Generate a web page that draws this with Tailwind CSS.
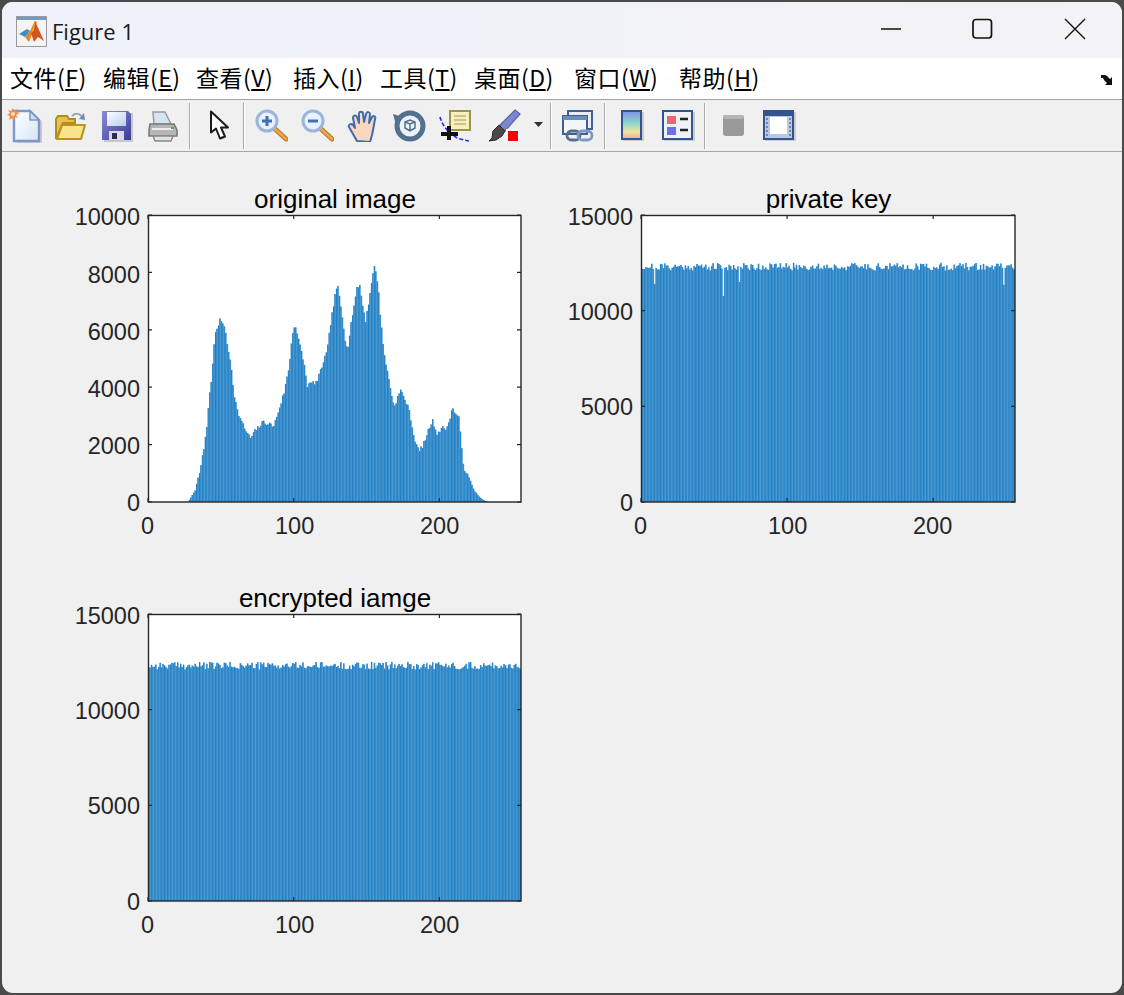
<!doctype html>
<html lang="en">

<head>
  <meta charset="UTF-8" />
  <title>Figure 1</title>
  <script src="https://cdn.jsdelivr.net/npm/@tailwindcss/browser@4"></script>
</head>

<body class="bg-[#4a4a4a] h-[995px] w-[1124px] overflow-hidden">
  <main class="mx-[2px] mt-[2px] h-[991px] w-[1120px] rounded-[11px] overflow-hidden bg-[#f0f0f0] flex flex-col">

    <!-- Title bar -->
    <header class="h-[56px] bg-gradient-to-r from-[#eff2fa] to-[#f3f2f6] flex items-center shrink-0">
      <svg class="ml-[14px] mt-[2px] w-[31px] h-[31px]" viewBox="0 0 31 31">
        <rect x="0.5" y="0.5" width="30" height="30" fill="#f4f4f4" stroke="#9a9a9a" />
        <rect x="1" y="1" width="29" height="3" fill="#6f9cc4" />
        <path d="M3 18 L11 13 L14 15 L9 21 Z" fill="#3d8fc9" />
        <path d="M9 21 L14 15 L19 5 L21 6 L16 18 L13 26 Z" fill="#e8822a" />
        <path d="M19 5 L23 14 L28 25 L22 21 L18 26 L15 17 Z" fill="#d9531e" />
        <path d="M19 5 L17 12 L15 17 L18 14 Z" fill="#f4c230" />
      </svg>
      <span class="ml-[5px] mt-[1px] text-[22px] text-[#1a1a1a] font-['Open_Sans','Noto_Sans',sans-serif] leading-none">Figure 1</span>
      <div class="ml-auto flex items-center mt-[-3px]">
        <svg class="w-[22px] h-[22px]" viewBox="0 0 22 22"><path d="M1 11h20" stroke="#111" stroke-width="1.7" /></svg>
        <svg class="ml-[69px] w-[22px] h-[22px]" viewBox="0 0 22 22"><rect x="2" y="1.5" width="18.5" height="18.5" rx="3" fill="none" stroke="#111" stroke-width="1.7" /></svg>
        <svg class="ml-[71px] mr-[36px] w-[22px] h-[22px]" viewBox="0 0 22 22"><path d="M1 1l20 20M21 1L1 21" stroke="#111" stroke-width="1.4" /></svg>
      </div>
    </header>

    <!-- Menu bar -->
    <nav class="h-[42px] bg-white border-b border-[#a3a3a3] flex items-center shrink-0 pl-[8px] text-[23px] tracking-[0.5px] leading-none text-black font-['Noto_Sans_CJK_SC','Noto_Sans',sans-serif]">
      <span class="w-[93px] mt-[-2px]">文件(<u>F</u>)</span>
      <span class="w-[93px] mt-[-2px]">编辑(<u>E</u>)</span>
      <span class="w-[97px] mt-[-2px]">查看(<u>V</u>)</span>
      <span class="w-[87px] mt-[-2px]">插入(<u>I</u>)</span>
      <span class="w-[94px] mt-[-2px]">工具(<u>T</u>)</span>
      <span class="w-[100px] mt-[-2px]">桌面(<u>D</u>)</span>
      <span class="w-[105px] mt-[-2px]">窗口(<u>W</u>)</span>
      <span class="mt-[-2px]">帮助(<u>H</u>)</span>
      <svg class="ml-auto mr-[7px] mt-[1px] w-[15px] h-[13px]" viewBox="0 0 15 13">
        <path d="M1 2h4l2 1 3 3 2-2v8H5l2-2-3-3-1-2H1z" fill="#111" />
      </svg>
    </nav>

    <!-- Toolbar -->
    <div class="h-[52px] bg-[#f0f0f0] border-b border-[#a8a8a8] flex items-center shrink-0 blur-[0.4px]">
      <span class="w-[46px] flex justify-center">
        <svg class="w-[36px] h-[36px]" viewBox="0 0 36 36">
          <defs>
            <linearGradient id="page" x1="0" y1="0" x2="1" y2="1"><stop offset="0" stop-color="#fff" /><stop offset="1" stop-color="#d5e6f8" /></linearGradient>
          </defs>
          <path d="M8 3h16l9 9v21H8z" fill="#8a8a8a" opacity=".35" transform="translate(2 2)" />
          <path d="M7 3h16l9 9v21H7z" fill="url(#page)" stroke="#7d97c9" stroke-width="2.4" />
          <path d="M23 3v9h9z" fill="#cfdcef" stroke="#7d97c9" stroke-width="1.5" />
          <path d="M6 0l1 3 3-2-1 3 4 1-4 2 2 3-3-1-1 4-2-3-3 2 1-4-3-1 3-2-2-3 3 1z" fill="#ef8a55" />
          <circle cx="6" cy="6" r="2" fill="#ffe3b0" />
        </svg>
      </span>
      <span class="w-[46px] flex justify-center">
        <svg class="w-[32px] h-[30px]" viewBox="0 0 32 30">
          <path d="M1 28V8l2-3h9l2 3h6v4H8z" fill="#e9c052" stroke="#b08d1e" stroke-width="2" />
          <path d="M2 28l5-14h23l-4 14z" fill="#fbe58a" stroke="#b8951f" stroke-width="2.2" stroke-linejoin="round" />
          <path d="M17 5c3-3 8-3 10 1" fill="none" stroke="#9aa9bd" stroke-width="2" />
          <path d="M24 8l6 1-1-7z" fill="#6b8fb5" />
        </svg>
      </span>
      <span class="w-[46px] flex justify-center">
        <svg class="w-[32px] h-[32px]" viewBox="0 0 32 32">
          <defs>
            <linearGradient id="disk" x1="0" y1="0" x2="1" y2="1"><stop offset="0" stop-color="#8b8bd8" /><stop offset="1" stop-color="#3b3b96" /></linearGradient>
            <linearGradient id="label" x1="0" y1="0" x2="1" y2="1"><stop offset="0" stop-color="#fff" /><stop offset="1" stop-color="#b9cdf0" /></linearGradient>
          </defs>
          <rect x="3" y="3" width="29" height="29" fill="#8a8a8a" opacity=".4" />
          <path d="M1 1h26l3 3v26H1z" fill="url(#disk)" />
          <rect x="6" y="2" width="19" height="14" fill="url(#label)" />
          <rect x="8" y="21" width="15" height="9" fill="#d8d8e8" />
          <rect x="11" y="23" width="5" height="6" fill="#2c2c50" />
        </svg>
      </span>
      <span class="w-[46px] flex justify-center">
        <svg class="w-[30px] h-[32px]" viewBox="0 0 30 32">
          <path d="M6 14L5 2h12l6 12z" fill="#d6e4f2" stroke="#9a9a9a" stroke-width="1.5" />
          <path d="M2 14h24l3 6v6H1v-6z" fill="#b5b5b5" stroke="#7a7a7a" stroke-width="1.6" />
          <path d="M5 26h20l-2 5H7z" fill="#e2e2e2" stroke="#888" stroke-width="1.4" />
          <path d="M4 19h21" stroke="#ededed" stroke-width="2" />
          <rect x="23" y="17" width="3" height="2" fill="#4fa55a" />
        </svg>
      </span>
      <i class="block w-[2px] h-[46px] ml-[3px] mr-[5px] bg-[#a9a9a9] border-r border-white"></i>
      <span class="w-[46px] flex justify-center">
        <svg class="ml-[2px] w-[22px] h-[31px]" viewBox="0 0 22 31">
          <path d="M2 1.5v21l5-4 4 10 5-2-4-9h7z" transform="translate(1 1)" fill="#aaa" opacity=".4" />
          <path d="M2 1.5v21l5-4 4 10 5-2-4-9h7z" fill="#fff" stroke="#1c1c1c" stroke-width="2" stroke-linejoin="round" />
        </svg>
      </span>
      <i class="block w-[2px] h-[46px] ml-[1px] mr-[3px] bg-[#a9a9a9] border-r border-white"></i>
      <span class="w-[46px] flex justify-center">
        <svg class="w-[33px] h-[33px]" viewBox="0 0 33 33">
          <path d="M19 19l12 11" stroke="#b07a2a" stroke-width="5" stroke-linecap="round" />
          <path d="M20 20l11 10" stroke="#f0a540" stroke-width="3" stroke-linecap="round" />
          <circle cx="12" cy="12" r="10" fill="#e8f2ff" stroke="#9db4dd" stroke-width="3" />
          <path d="M7 12h10M12 7v10" stroke="#3f6fb5" stroke-width="3" />
        </svg>
      </span>
      <span class="w-[46px] flex justify-center">
        <svg class="w-[33px] h-[33px]" viewBox="0 0 33 33">
          <path d="M19 19l12 11" stroke="#b07a2a" stroke-width="5" stroke-linecap="round" />
          <path d="M20 20l11 10" stroke="#f0a540" stroke-width="3" stroke-linecap="round" />
          <circle cx="12" cy="12" r="10" fill="#e8f2ff" stroke="#9db4dd" stroke-width="3" />
          <path d="M7 12h10" stroke="#3f6fb5" stroke-width="3" />
        </svg>
      </span>
      <span class="w-[46px] flex justify-center">
        <svg class="w-[33px] h-[32px]" viewBox="0 0 33 32">
          <path d="M10 31L2 17c-1-2 2-4 4-2l2 3-2-10c0-3 3-3 4-1l2 6V4c0-3 4-3 4 0l1 8 2-8c1-3 4-2 4 0l-1 9 3-6c2-2 4 0 3 2l-2 11-1 5-2 7z" fill="#f8d9c0" stroke="#3f6cb0" stroke-width="2" stroke-linejoin="round" />
        </svg>
      </span>
      <span class="w-[46px] flex justify-center">
        <svg class="w-[34px] h-[33px]" viewBox="0 0 34 33">
          <circle cx="18" cy="17" r="13" fill="#eef1f6" stroke="#52708f" stroke-width="5" />
          <path d="M1 5l10 3-7 8z" fill="#52708f" />
          <path d="M13 13l5-2 5 2v6l-5 3-5-3zM13 13l5 2 5-2M18 15v7" fill="none" stroke="#52708f" stroke-width="1.5" />
        </svg>
      </span>
      <span class="w-[46px] flex justify-center">
        <svg class="w-[32px] h-[32px]" viewBox="0 0 32 32">
          <rect x="11" y="1" width="20" height="19" fill="#f7f0b8" stroke="#9c9350" stroke-width="2" />
          <path d="M15 6h12M15 10h12M15 14h12" stroke="#bdb77c" stroke-width="1.6" />
          <path d="M1 7c2 8 8 15 14 19 4 3 10 4 15 5" fill="none" stroke="#2a2af0" stroke-width="1.6" stroke-dasharray="4 2" />
          <path d="M2 24h17M10 16v14" stroke="#111" stroke-width="4" />
        </svg>
      </span>
      <span class="w-[46px] ml-[3px] flex justify-center">
        <svg class="w-[33px] h-[33px]" viewBox="0 0 33 33">
          <path d="M27 1l5 4-15 17-6-5z" fill="#7f86d0" stroke="#5a62a8" stroke-width="1.2" />
          <path d="M11 16l6 6-3 5-6 4-7 1 3-3 1-7z" fill="#4a4a4a" stroke="#2a2a2a" />
          <rect x="18" y="20" width="13" height="13" fill="#fff" />
          <rect x="20" y="22" width="10" height="10" fill="#f00" />
        </svg>
      </span>
      <svg class="w-[9px] h-[5px] ml-[7px] mr-[7px] mt-[-3px]" viewBox="0 0 9 5"><path d="M0 0h9L4.500 5z" fill="#333" /></svg>
      <i class="block w-[2px] h-[46px] mr-[3px] bg-[#a9a9a9] border-r border-white"></i>
      <span class="w-[46px] flex justify-center">
        <svg class="w-[32px] h-[32px]" viewBox="0 0 32 32">
          <rect x="6" y="1" width="24" height="18" fill="#e9edf5" stroke="#3f5f92" stroke-width="2" />
          <rect x="1" y="6" width="24" height="18" fill="#f2f5fa" stroke="#3f5f92" stroke-width="2" />
          <rect x="1" y="6" width="24" height="4" fill="#6a8ec0" />
          <rect x="5" y="21" width="13" height="9" rx="4.500" fill="none" stroke="#55708f" stroke-width="2.8" />
          <rect x="16" y="21" width="14" height="9" rx="4.500" fill="none" stroke="#7f9abf" stroke-width="2.8" />
        </svg>
      </span>
      <i class="block w-[2px] h-[46px] mx-[3px] bg-[#a9a9a9] border-r border-white"></i>
      <span class="w-[46px] flex justify-center">
        <svg class="w-[23px] h-[31px]" viewBox="0 0 23 31">
          <defs>
            <linearGradient id="cbar" x1="0" y1="0" x2="0" y2="1">
              <stop offset="0" stop-color="#7f8fe8" /><stop offset=".45" stop-color="#8fd8c8" /><stop offset=".75" stop-color="#f0e49a" /><stop offset="1" stop-color="#f0a5a0" />
            </linearGradient>
          </defs>
          <rect x="2" y="2" width="21" height="29" fill="#999" opacity=".4" />
          <rect x="1" y="1" width="19" height="28" fill="url(#cbar)" stroke="#33558f" stroke-width="2" />
        </svg>
      </span>
      <span class="w-[46px] flex justify-center">
        <svg class="w-[33px] h-[31px]" viewBox="0 0 33 31">
          <rect x="2" y="2" width="31" height="29" fill="#999" opacity=".4" />
          <rect x="1" y="1" width="29" height="28" fill="#eef1f8" stroke="#33558f" stroke-width="2" />
          <rect x="5" y="6" width="9" height="8" fill="#e86a6a" />
          <rect x="5" y="17" width="9" height="8" fill="#6a70e8" />
          <path d="M18 9h8M18 20h8" stroke="#222" stroke-width="2.400" />
        </svg>
      </span>
      <i class="block w-[2px] h-[46px] ml-[3px] mr-[4px] bg-[#a9a9a9] border-r border-white"></i>
      <span class="w-[46px] flex justify-center">
        <svg class="w-[23px] h-[23px]" viewBox="0 0 23 23">
          <rect x="1" y="1" width="21" height="21" rx="3" fill="#9a9a9a" />
          <rect x="1" y="1" width="21" height="4" rx="2" fill="#b5b5b5" />
        </svg>
      </span>
      <span class="w-[46px] flex justify-center">
        <svg class="w-[33px] h-[31px]" viewBox="0 0 33 31">
          <rect x="2" y="2" width="31" height="29" fill="#999" opacity=".4" />
          <rect x="1" y="1" width="29" height="28" fill="#b9c9e2" stroke="#33558f" stroke-width="2" />
          <rect x="1" y="1" width="29" height="5" fill="#33558f" />
          <path d="M4 8v19M27 8v19" stroke="#6f86ad" stroke-width="2" stroke-dasharray="2 2" />
          <rect x="7" y="7" width="17" height="17" fill="#fff" />
        </svg>
      </span>
    </div>

    <!-- Axes -->
    <section class="flex-1 pl-[146px] pt-[63px] grid grid-cols-[374px_375px] grid-rows-[288px_288px] gap-x-[119px] gap-y-[111px] content-start font-['Liberation_Sans',Arial,sans-serif] text-[23.5px] leading-none text-[#262626]">

      <div class="relative">
        <h2 class="absolute left-0 right-0 top-[-29px] text-center text-black text-[26px]">original image</h2>
        <svg id="hist-original" class="absolute left-0 top-0 w-[374px] h-[288px] overflow-visible"></svg>
        <span class="absolute right-[382px] top-[-9px]">10000</span>
        <span class="absolute right-[382px] top-[49px]">8000</span>
        <span class="absolute right-[382px] top-[106px]">6000</span>
        <span class="absolute right-[382px] top-[163px]">4000</span>
        <span class="absolute right-[382px] top-[220px]">2000</span>
        <span class="absolute right-[382px] top-[277px]">0</span>
        <span class="absolute left-[-7px] top-[300px]">0</span>
        <span class="absolute left-[127px] top-[300px]">100</span>
        <span class="absolute left-[272px] top-[300px]">200</span>
      </div>

      <div class="relative">
        <h2 class="absolute left-0 right-0 top-[-29px] text-center text-black text-[26px]">private key</h2>
        <svg id="hist-key" class="absolute left-0 top-0 w-[375px] h-[288px] overflow-visible"></svg>
        <span class="absolute right-[383px] top-[-9px]">15000</span>
        <span class="absolute right-[383px] top-[86px]">10000</span>
        <span class="absolute right-[383px] top-[181px]">5000</span>
        <span class="absolute right-[383px] top-[277px]">0</span>
        <span class="absolute left-[-7px] top-[300px]">0</span>
        <span class="absolute left-[127px] top-[300px]">100</span>
        <span class="absolute left-[272px] top-[300px]">200</span>
      </div>

      <div class="relative">
        <h2 class="absolute left-0 right-0 top-[-29px] text-center text-black text-[26px]">encrypted iamge</h2>
        <svg id="hist-encrypted" class="absolute left-0 top-0 w-[374px] h-[288px] overflow-visible"></svg>
        <span class="absolute right-[382px] top-[-9px]">15000</span>
        <span class="absolute right-[382px] top-[86px]">10000</span>
        <span class="absolute right-[382px] top-[181px]">5000</span>
        <span class="absolute right-[382px] top-[277px]">0</span>
        <span class="absolute left-[-7px] top-[300px]">0</span>
        <span class="absolute left-[127px] top-[300px]">100</span>
        <span class="absolute left-[272px] top-[300px]">200</span>
      </div>
    </section>
  </main>

  <script>
    // small seeded generator so every render gets the same bars
    function makeRandom(seed) {
      return function () {
        seed = (seed * 1664525 + 1013904223) % 4294967296;
        return seed / 4294967296;
      };
    }

    // [bin, count] outline of the first histogram
    var curve = [[0,0],[27,0],[28.800,140],[32,418],[35.700,1185],[38,1880],[40.300,2750],[41.400,3620],[43,4150],[45.300,5760],[49,6320],[51.700,6260],[54.400,5360],[56.300,4950],[58.600,3840],[60.900,3200],[64.300,2750],[67.700,2400],[70,2230],[73.400,2500],[79,2800],[86,2650],[88.300,3030],[92.900,3800],[96.300,4670],[98.600,5820],[100.400,6240],[103.800,5470],[106.600,4890],[108.900,4070],[112.400,4150],[115.800,4190],[120.300,4950],[122.600,5240],[125,6240],[129.500,7630],[131.800,6860],[134,6060],[135.200,5590],[136.800,5410],[139.800,6520],[142.800,7390],[144.800,7630],[146.700,6930],[149,6340],[151.200,6980],[153,7680],[155.300,8260],[157.400,7630],[159.200,6460],[162,5060],[164.900,4320],[168.400,3320],[173,3900],[176.400,3550],[179.400,3100],[182,2330],[185.600,1750],[189,2050],[194.700,2860],[198.100,2400],[201.600,2580],[205,2580],[208.400,3270],[213,2930],[214.600,2050],[216.400,1180],[219.800,880],[223.300,420],[228,140],[231.300,30],[234,0],[256,0]];

    function originalCounts() {
      var rnd = makeRandom(7), out = [];
      for (var b = 0; b < 256; b++) {
        var i = 0;
        while (curve[i + 1][0] <= b && i < curve.length - 2) i++;
        var a = curve[i], c = curve[i + 1];
        var v = a[1] + (c[1] - a[1]) * (b - a[0]) / (c[0] - a[0]);
        out.push(Math.max(0, v + (rnd() - 0.5) * Math.min(160, v * 0.08)));
      }
      return out;
    }

    function flatCounts(seed, dips) {
      var rnd = makeRandom(seed), out = [];
      for (var b = 0; b < 256; b++) out.push(12300 + (rnd() - 0.5) * 400);
      for (var k in dips) out[k] = dips[k];
      return out;
    }

    // sizes are passed in: the stylesheet may not be applied yet when this runs
    function drawAxes(id, boxW, boxH, counts, yMax, ticks) {
      var svg = document.getElementById(id);
      var W = boxW - 1, H = boxH - 1, barW = W / 256, s = '';
      s += '<rect width="' + W + '" height="' + H + '" fill="#fff"/>';
      counts.forEach(function (v, b) {
        var h = v / yMax * H, x = b * barW;
        if (h <= 0) return;
        s += '<rect x="' + x + '" y="' + (H - h) + '" width="' + barW + '" height="' + h + '" fill="#4296d2"/>';
        s += '<rect x="' + x + '" y="' + (H - h) + '" width="0.5" height="' + h + '" fill="#0068b4"/>';
      });
      var d = '';
      ticks.forEach(function (t) {
        var y = H - t / yMax * H;
        d += 'M0 ' + y + 'h4M' + W + ' ' + y + 'h-4';
      });
      [0, 100, 200].forEach(function (t) {
        var x = t / 256 * W;
        d += 'M' + x + ' 0v4M' + x + ' ' + H + 'v-4';
      });
      s += '<path d="' + d + '" stroke="#262626" stroke-width="1.2" fill="none"/>';
      s += '<rect x="0.5" y="0.5" width="' + (W - 0.5) + '" height="' + (H - 0.5) + '" fill="none" stroke="#262626" stroke-width="1.4"/>';
      svg.innerHTML = s;
    }

    drawAxes('hist-original', 374, 288, originalCounts(), 10000, [0, 2000, 4000, 6000, 8000, 10000]);
    drawAxes('hist-key', 375, 288, flatCounts(21, { 9: 11390, 56: 10770, 67: 11500, 248: 11350 }), 15000, [0, 5000, 10000, 15000]);
    drawAxes('hist-encrypted', 374, 288, flatCounts(99, {}), 15000, [0, 5000, 10000, 15000]);
  </script>
</body>

</html>
